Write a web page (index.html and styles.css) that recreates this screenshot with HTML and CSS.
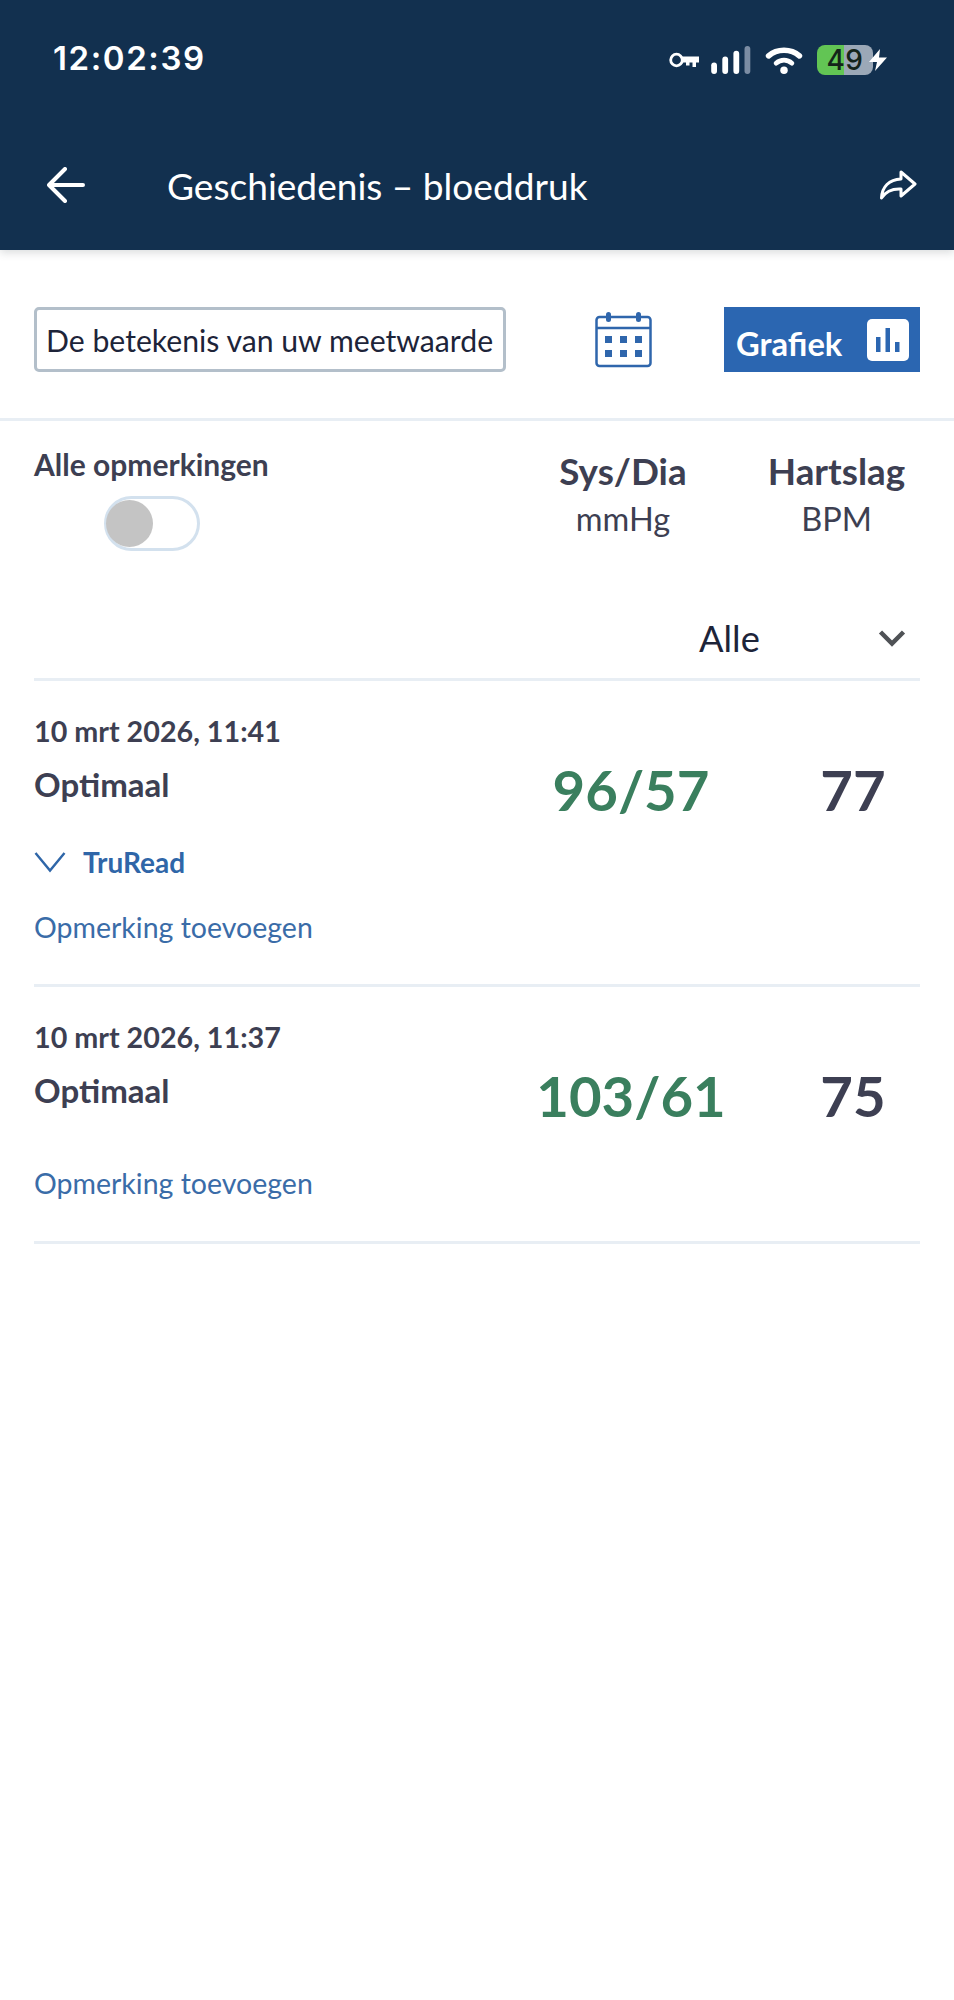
FILE: index.html
```html
<!DOCTYPE html>
<html lang="nl">
<head>
<meta charset="utf-8">
<title>Geschiedenis – bloeddruk</title>
<link rel="stylesheet" href="styles.css">
</head>
<body>
<header class="header">
  <div class="status">
    <span class="time">12:02:39</span>
    <div class="status-icons">
      <svg class="i-key" viewBox="0 0 30 16"><circle cx="7.500" cy="8" r="5.800" fill="none" stroke="#fff" stroke-width="2.800"/><path d="M13 4.500H30V10.500H27V15H23.500V10.500H20.500V13.500H17V10.500H13Z" fill="#fff"/></svg>
      <svg class="i-signal" viewBox="0 0 41 29"><rect x="0" y="17" width="6" height="12" rx="3" fill="#fff"/><rect x="11.500" y="11" width="6" height="18" rx="3" fill="#fff"/><rect x="23" y="5" width="6" height="24" rx="3" fill="#fff"/><rect x="34.500" y="0" width="6" height="29" rx="3" fill="#7b8ca3"/></svg>
      <svg class="i-wifi" viewBox="0 0 40 30"><path d="M3.500 10.500C12.500 2.500 27.500 2.500 36.500 10.500" fill="none" stroke="#fff" stroke-width="6" stroke-linecap="round"/><path d="M11.500 18.500C16.500 14 23.500 14 28.500 18.500" fill="none" stroke="#fff" stroke-width="5" stroke-linecap="round"/><circle cx="20" cy="26" r="4" fill="#fff"/></svg>
      <div class="battery"><span class="battery-num">49</span></div>
      <svg class="i-bolt" viewBox="0 0 20 22"><path d="M12 0L1 13H9L7 22L19 8.500H11Z" fill="#fff"/></svg>
    </div>
  </div>
  <div class="nav">
    <svg class="i-back" viewBox="0 0 38 36"><path d="M36 18H3M18 2L2 18L18 34" fill="none" stroke="#fff" stroke-width="4" stroke-linecap="round" stroke-linejoin="round"/></svg>
    <h1 class="title">Geschiedenis – bloeddruk</h1>
    <svg class="i-share" viewBox="0 0 38 30"><path d="M22 2L36 14L22 26V19C13 18.500 7 21 2.500 28C3 17 10 9.500 22 9Z" fill="none" stroke="#fff" stroke-width="3" stroke-linejoin="round"/></svg>
  </div>
</header>

<section class="toolbar">
  <button class="meaning">De betekenis van uw meetwaarde</button>
  <svg class="i-cal" viewBox="0 0 57 57">
    <rect x="1.500" y="6" width="54" height="49" rx="3" fill="none" stroke="#2f66ac" stroke-width="2.500"/>
    <path d="M1.500 17H55.500" stroke="#2f66ac" stroke-width="2.500"/>
    <rect x="11" y="1" width="5" height="10" rx="2.500" fill="#2f66ac"/>
    <rect x="41" y="1" width="5" height="10" rx="2.500" fill="#2f66ac"/>
    <g fill="#2f66ac"><rect x="10" y="25" width="7" height="7"/><rect x="25" y="25" width="7" height="7"/><rect x="40" y="25" width="7" height="7"/><rect x="10" y="39" width="7" height="7"/><rect x="25" y="39" width="7" height="7"/><rect x="40" y="39" width="7" height="7"/></g>
  </svg>
  <button class="chart-btn">
    <span class="chart-label">Grafiek</span>
    <svg class="i-chart" viewBox="0 0 42 42"><rect width="42" height="42" rx="5" fill="#fff"/><rect x="9" y="18" width="4.500" height="15" fill="#2b66b1"/><rect x="18.500" y="9" width="4.500" height="24" fill="#2b66b1"/><rect x="28" y="23" width="4.500" height="10" fill="#2b66b1"/></svg>
  </button>
</section>

<section class="columns">
  <div class="notes-col">
    <div class="notes-label">Alle opmerkingen</div>
    <div class="toggle"><span class="knob"></span></div>
  </div>
  <div class="col col-bp"><div class="col-head">Sys/Dia</div><div class="col-unit">mmHg</div></div>
  <div class="col col-hr"><div class="col-head">Hartslag</div><div class="col-unit">BPM</div></div>
</section>

<div class="filter">
  <span class="filter-value">Alle</span>
  <svg class="i-chev" viewBox="0 0 28 18"><path d="M2.500 3L14 14.500L25.500 3" fill="none" stroke="#4f5256" stroke-width="4.500"/></svg>
</div>

<main class="list">
  <article class="row row-a">
    <div class="row-left">
      <div class="date">10 mrt 2026, 11:41</div>
      <div class="cat">Optimaal</div>
      <div class="truread">
        <svg class="i-tru" viewBox="0 0 32 22"><path d="M1.500 2L16 19.500L30.500 2" fill="none" stroke="#2f66a8" stroke-width="2.400"/></svg>
        <span>TruRead</span>
      </div>
      <a class="add">Opmerking toevoegen</a>
    </div>
    <div class="val val-bp">96/57</div>
    <div class="val val-hr">77</div>
  </article>
  <article class="row row-b">
    <div class="row-left">
      <div class="date">10 mrt 2026, 11:37</div>
      <div class="cat">Optimaal</div>
      <a class="add">Opmerking toevoegen</a>
    </div>
    <div class="val val-bp">103/61</div>
    <div class="val val-hr">75</div>
  </article>
</main>
</body>
</html>
```

FILE: styles.css
```css
* { box-sizing: border-box; }
html, body { margin: 0; padding: 0; background: #fff; }
body { width: 954px; height: 2000px; overflow: hidden; font-family: Lato, "Liberation Sans", sans-serif; color: #3d3f52; }

.header { height: 250px; background: #12304f; box-shadow: 0 3px 8px rgba(60, 70, 80, .18); padding: 41px 36px 0 46px; }
.status { display: flex; justify-content: space-between; align-items: center; height: 34px; margin-top: 2px; padding: 0 30px 0 7px; }
.time { font-family: Inter, sans-serif; font-weight: 600; font-size: 33px; letter-spacing: 1.600px; color: #fff; margin-top: -4px; }
.status-icons { display: flex; align-items: center; }
.i-key { width: 30px; height: 16px; margin-right: 12px; }
.i-signal { width: 40px; height: 28px; margin-right: 14px; }
.i-wifi { width: 38px; height: 28px; margin-right: 14px; }
.battery { width: 56px; height: 30px; border-radius: 8px; background: linear-gradient(90deg, #62c554 0 49%, #9ba8b7 49%); display: flex; align-items: center; justify-content: center; }
.battery-num { font-family: Inter, sans-serif; font-weight: 500; font-size: 28px; color: #14241a; letter-spacing: .5px; }
.i-bolt { width: 20px; height: 22px; margin-left: -5px; }

.nav { display: flex; align-items: center; margin-top: 83px; height: 50px; }
.i-back { width: 38px; height: 36px; flex: none; margin-left: 1px; }
.title { margin: 0 0 0 82px; font-weight: 400; font-size: 37.100px; color: #fff; flex: 1; }
.i-share { width: 38px; height: 30px; flex: none; margin-right: 1px; }

.toolbar { display: flex; align-items: center; height: 171px; padding: 61px 34px 50px; border-bottom: 3px solid #e8eef4; }
.meaning { width: 472px; height: 65px; padding: 0 0 0 9px; background: #fff; border: 3px solid #b3bfca; border-radius: 5px; font: 400 30.200px Lato, sans-serif; color: #1d2439; text-align: left; white-space: nowrap; }
.i-cal { width: 57px; height: 57px; margin-left: 89px; }
.chart-btn { width: 196px; height: 65px; margin-left: 72px; padding: 0 11px 0 12px; border: 0; background: #2b66b1; color: #fff; font: 700 32.700px Lato, sans-serif; display: flex; align-items: center; justify-content: space-between; }
.chart-label { margin-top: 7px; }
.i-chart { width: 42px; height: 42px; }

.columns { display: flex; padding: 0 34px; height: 130px; }
.notes-col { width: 500px; padding-top: 25px; }
.notes-label { font-weight: 700; font-size: 30px; line-height: 36px; }
.toggle { width: 96px; height: 55px; margin: 14px 0 0 70px; border: 3px solid #d3e1ee; border-radius: 28px; display: flex; align-items: center; }
.knob { width: 47px; height: 47px; margin-left: -1px; border-radius: 50%; background: #c4c4c4; }
.col { text-align: center; padding-top: 27px; }
.col-bp { width: 178px; }
.col-hr { width: 167px; margin-left: 41px; }
.col-head { font-weight: 700; font-size: 36.800px; line-height: 46px; }
.col-unit { font-size: 32.500px; line-height: 40px; margin-top: 5px; }

.filter { display: flex; align-items: center; height: 130px; margin: 0 34px; padding: 46px 14px 0 665px; border-bottom: 3px solid #e8eef4; justify-content: space-between; }
.filter-value { font-size: 36.300px; color: #1d2439; }
.i-chev { width: 28px; height: 18px; }

.row { display: flex; margin: 0 34px; border-bottom: 3px solid #e8eef4; }
.row-a { height: 306px; }
.row-b { height: 257px; }
.row-left { flex: 1; padding-top: 32px; }
.date { font-weight: 700; font-size: 28.700px; line-height: 36px; }
.cat { font-weight: 700; font-size: 33px; line-height: 40px; margin-top: 15px; }
.truread { display: flex; align-items: center; gap: 17px; margin-top: 38px; height: 40px; font-weight: 700; font-size: 28px; color: #2f66a8; }
.i-tru { width: 32px; height: 22px; }
.add { display: block; margin-top: 25px; font-size: 28.500px; line-height: 40px; color: #3a6ca8; }
.row-b .add { margin-top: 53px; }
.val { font-weight: 700; font-size: 56.300px; line-height: 70px; padding-top: 73px; text-align: center; flex: none; }
.val-bp { color: #3a7f5e; width: 310px; }
.val-hr { width: 134px; }
```
